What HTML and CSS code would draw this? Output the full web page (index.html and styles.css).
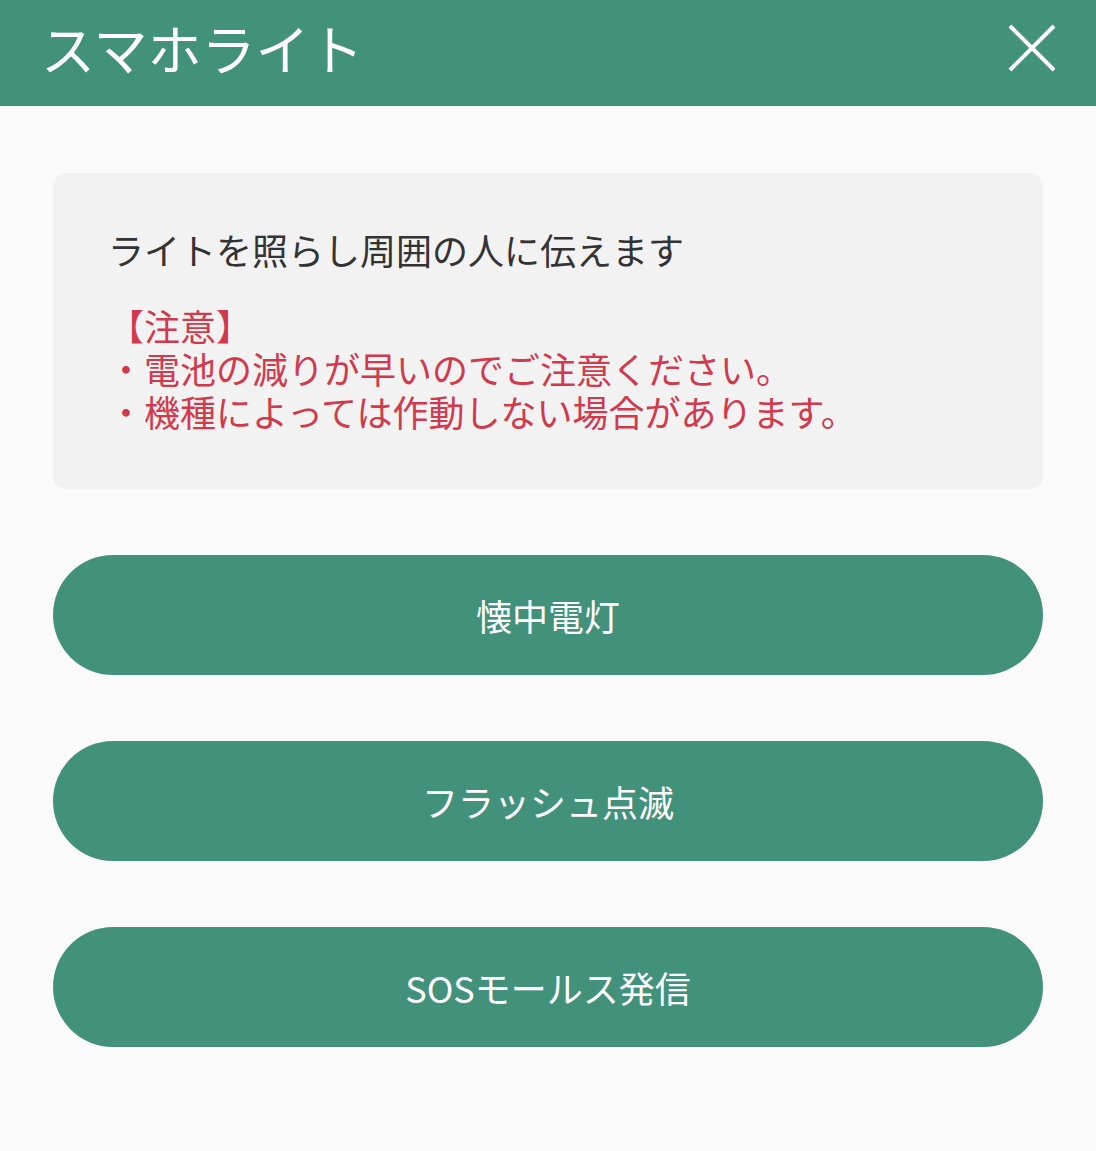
FILE: index.html
```html
<!DOCTYPE html>
<html lang="ja">
<head>
    <meta charset="UTF-8">
    <meta name="viewport" content="width=device-width, initial-scale=1.0">
    <title>スマホライト</title>
    <link rel="stylesheet" href="styles.css">
</head>
<body>

    <header class="app-bar">
        <h1 class="app-title">スマホライト</h1>
        <button class="close-btn" type="button" aria-label="閉じる">
            <svg width="48" height="48" viewBox="0 0 48 48">
                <line x1="2" y1="2" x2="46" y2="46" stroke="#fff" stroke-width="4"/>
                <line x1="46" y1="2" x2="2" y2="46" stroke="#fff" stroke-width="4"/>
            </svg>
        </button>
    </header>

    <main class="content">
        <section class="info-card">
            <p class="lead">ライトを照らし周囲の人に伝えます</p>
            <div class="notice">
                <div>【注意】</div>
                <div>・電池の減りが早いのでご注意ください。</div>
                <div>・機種によっては作動しない場合があります。</div>
            </div>
        </section>

        <div class="actions">
            <button class="action-btn" type="button">懐中電灯</button>
            <button class="action-btn" type="button">フラッシュ点滅</button>
            <button class="action-btn" type="button">SOSモールス発信</button>
        </div>
    </main>

</body>
</html>
```

FILE: styles.css
```css
body {
    font-family: "Noto Sans CJK JP", "Noto Sans", sans-serif;
    background-color: #fafafa;
    margin: 0;
    padding: 0;
}

.app-bar {
    display: flex;
    align-items: center;
    justify-content: space-between;
    box-sizing: border-box;
    height: 106px;
    padding: 0 40px 10px 41px;
    background-color: #41917b;
    color: #fff;
}

.app-title {
    margin: 0;
    font-size: 54px;
    font-weight: 400;
    line-height: 1;
}

.close-btn {
    display: flex;
    padding: 0;
    background: none;
    border: none;
    cursor: pointer;
}

.content {
    padding: 67px 53px 0;
}

.info-card {
    padding: 55px 55px 56px;
    background-color: #f2f2f2;
    border-radius: 12px;
}

.lead {
    margin: 0;
    font-size: 36px;
    line-height: 43px;
    color: #333;
}

.notice {
    margin-top: 33px;
    font-size: 36px;
    line-height: 43px;
    color: #d13a4c;
}

.actions {
    display: flex;
    flex-direction: column;
    gap: 66px;
    margin-top: 66px;
}

.action-btn {
    height: 120px;
    border: none;
    border-radius: 60px;
    background-color: #41917b;
    color: #fff;
    font-family: inherit;
    font-size: 36px;
    cursor: pointer;
}
```
